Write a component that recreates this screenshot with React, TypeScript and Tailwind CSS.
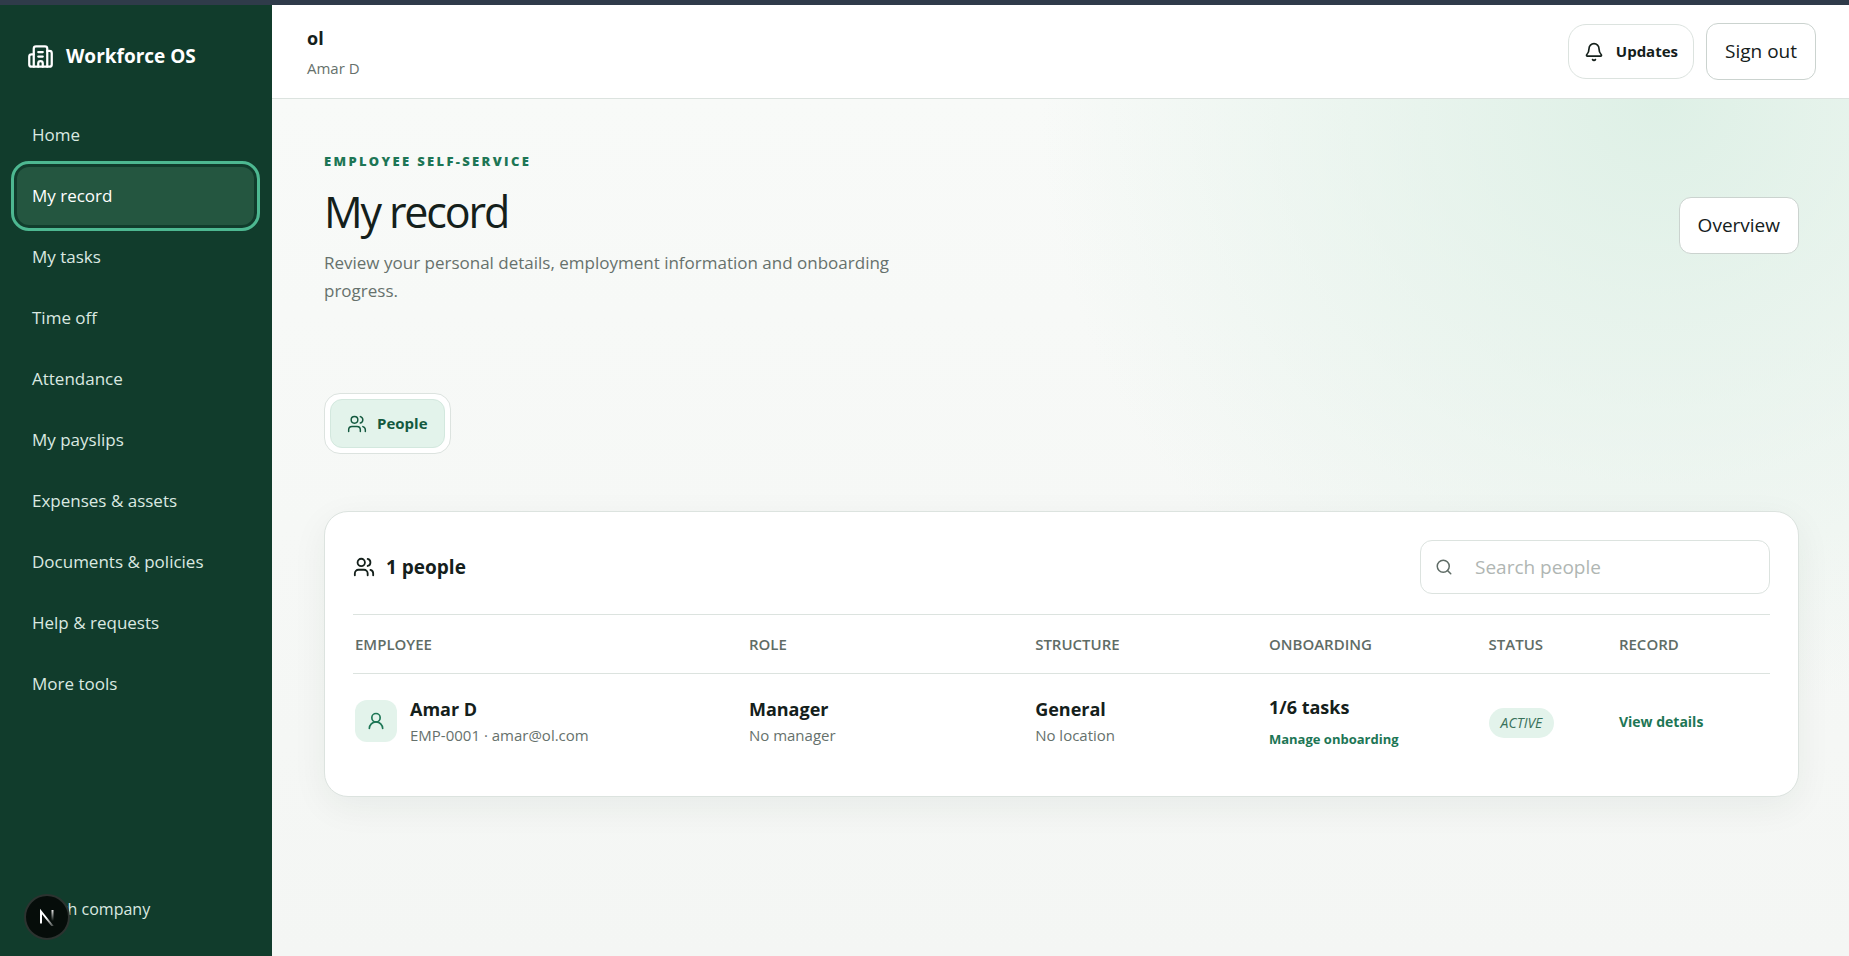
import { Bell, Building2, Search, UserRound, Users } from "lucide-react";
import { clsx } from "clsx";
import { useState } from "react";

const navLinks = [
  { href: "#home", label: "Home" },
  { href: "#record", label: "My record" },
  { href: "#tasks", label: "My tasks" },
  { href: "#time-off", label: "Time off" },
  { href: "#attendance", label: "Attendance" },
  { href: "#payslips", label: "My payslips" },
  { href: "#expenses", label: "Expenses & assets" },
  { href: "#documents", label: "Documents & policies" },
  { href: "#help", label: "Help & requests" },
  { href: "#more", label: "More tools" },
];

const columns = [
  { label: "Employee", width: "w-[27.8%]" },
  { label: "Role", width: "w-[20.2%]" },
  { label: "Structure", width: "w-[16.5%]" },
  { label: "Onboarding", width: "w-[15.5%]" },
  { label: "Status", width: "w-[9.2%]" },
  { label: "Record", width: "w-[10.8%]" },
];

const people = [
  {
    id: "EMP-0001",
    name: "Amar D",
    email: "amar@ol.com",
    role: "Manager",
    manager: "No manager",
    team: "General",
    location: "No location",
    tasks: "1/6 tasks",
    status: "ACTIVE",
  },
];

const DevBadge = () => (
  <button
    type="button"
    aria-label="Open dev tools"
    className="absolute bottom-4 left-6 size-[46px] rounded-full border-2 border-[#2c3330] bg-[#060d0a] flex items-center justify-center"
  >
    <svg width="18" height="18" viewBox="0 0 18 18" fill="none">
      <defs>
        <linearGradient id="stem" x1="0" y1="1" x2="0" y2="13" gradientUnits="userSpaceOnUse">
          <stop stopColor="#fff" />
          <stop offset="1" stopColor="#fff" stopOpacity="0" />
        </linearGradient>
        <linearGradient id="diagonal" x1="9" y1="9" x2="17" y2="19" gradientUnits="userSpaceOnUse">
          <stop stopColor="#fff" />
          <stop offset="1" stopColor="#fff" stopOpacity="0.1" />
        </linearGradient>
      </defs>
      <path d="M3 15.5V3.5L15 18.5" stroke="url(#diagonal)" strokeWidth="2" />
      <path d="M14.5 2v11.5" stroke="url(#stem)" strokeWidth="2" />
    </svg>
  </button>
);

const Sidebar = () => (
  <aside className="relative w-[272px] shrink-0 bg-[#113c2c] flex flex-col pl-[17px] pr-[18px] text-[#dbe9e1]">
    <div className="flex items-center gap-3 pl-[10px] pt-[37px] text-white">
      <Building2 size={27} strokeWidth={2} />
      <span className="text-[19px] leading-7 font-bold">Workforce OS</span>
    </div>
    <nav className="mt-9 flex flex-col gap-[3px]">
      {navLinks.map((link) => (
        <a
          key={link.href}
          href={link.href}
          className={clsx(
            "h-[58px] px-[15px] flex items-center rounded-xl text-[17px]",
            link.label === "My record" &&
              "bg-[#245640] text-white outline-3 outline-offset-3 outline-[#4db891]"
          )}
        >
          {link.label}
        </a>
      ))}
    </nav>
    <a href="#company" className="mt-auto mb-[35px] ml-3 text-[16px] leading-6">
      Switch company
    </a>
    <DevBadge />
  </aside>
);

const Topbar = () => (
  <header className="h-[94px] shrink-0 flex items-center justify-between bg-white border-b border-[#dce3df] pl-[35px] pr-[33px]">
    <div>
      <p className="text-[18px] leading-7 font-bold">ol</p>
      <p className="mt-1 text-[15px] leading-6 text-[#66716c]">Amar D</p>
    </div>
    <div className="flex items-center gap-3">
      <button
        type="button"
        className="h-[55px] px-[15px] flex items-center gap-3 rounded-[18px] border border-[#dce3df] text-[15px] font-bold"
      >
        <Bell size={20} />
        Updates
      </button>
      <button type="button" className="h-[57px] px-[18px] rounded-xl border border-[#cbd3cf] text-[19px]">
        Sign out
      </button>
    </div>
  </header>
);

const PeopleTable = ({ query }: { query: string }) => (
  <table className="w-full table-fixed border-t border-[#dce3df] text-left">
    <thead>
      <tr className="border-b border-[#dce3df]">
        {columns.map((column) => (
          <th
            key={column.label}
            scope="col"
            className={clsx("h-[59px] px-[2px] text-[15px] font-semibold uppercase text-[#5f6c66]", column.width)}
          >
            {column.label}
          </th>
        ))}
      </tr>
    </thead>
    <tbody>
      {people
        .filter((person) => person.name.toLowerCase().includes(query.toLowerCase()))
        .map((person) => (
          <tr key={person.id} className="h-[95px] *:px-[2px]">
            <td>
              <div className="flex items-center gap-[13px]">
                <span className="size-[42px] rounded-xl bg-[#e3f3eb] text-[#1d7655] flex items-center justify-center">
                  <UserRound size={20} />
                </span>
                <div>
                  <p className="text-[18px] leading-7 font-bold">{person.name}</p>
                  <p className="text-[15px] leading-6 text-[#66716c]">
                    {person.id} · {person.email}
                  </p>
                </div>
              </div>
            </td>
            <td>
              <p className="text-[18px] leading-7 font-bold">{person.role}</p>
              <p className="text-[15px] leading-6 text-[#66716c]">{person.manager}</p>
            </td>
            <td>
              <p className="text-[18px] leading-7 font-bold">{person.team}</p>
              <p className="text-[15px] leading-6 text-[#66716c]">{person.location}</p>
            </td>
            <td className="pt-[3px]">
              <p className="text-[18px] leading-7 font-bold">{person.tasks}</p>
              <a href="#onboarding" className="mt-1 block text-[13px] leading-7 font-bold text-[#1d7655]">
                Manage onboarding
              </a>
            </td>
            <td className="pt-[3px]">
              <em className="inline-block rounded-full bg-[#e3f3eb] px-3 text-[14px] leading-[30px] text-[#38715a]">
                {person.status}
              </em>
            </td>
            <td>
              <a href="#details" className="text-[14px] font-bold text-[#1d7655]">
                View details
              </a>
            </td>
          </tr>
        ))}
    </tbody>
  </table>
);

const App = () => {
  const [query, setQuery] = useState("");

  return (
    <div className="min-h-screen flex flex-col bg-[#f6f8f6] font-['Open_Sans','Noto_Sans',sans-serif] text-[#14201b]">
      <div className="h-[5px] bg-[#2f3b4a]" />
      <div className="grow flex">
        <Sidebar />
        <div className="grow min-w-0 flex flex-col">
          <Topbar />
          <main className="grow pl-[52px] pr-[50px] pt-[46px] pb-12 bg-[radial-gradient(circle_at_88%_0%,#def0e6_0,transparent_620px),linear-gradient(180deg,#f8faf8,#f4f6f4)]">
            {/* Page heading */}
            <div className="flex items-center justify-between">
              <div className="max-w-[600px]">
                <p className="text-[13px] leading-8 font-extrabold uppercase tracking-[0.18em] text-[#1d7655]">
                  Employee self-service
                </p>
                <h1 className="mt-[7px] text-[43px] leading-14 tracking-tighter">My record</h1>
                <p className="mt-[9px] text-[17px] leading-7 text-[#66716c]">
                  Review your personal details, employment information and onboarding progress.
                </p>
              </div>
              <button
                type="button"
                className="h-[57px] px-[18px] rounded-xl border border-[#cbd3cf] bg-white text-[19px]"
              >
                Overview
              </button>
            </div>

            {/* Section tabs */}
            <div className="mt-[88px] w-fit p-[5px] rounded-2xl border border-[#dce3df] bg-white">
              <button
                type="button"
                className="h-[49px] px-4 flex items-center gap-[10px] rounded-xl border border-[#d3e8de] bg-[#e3f3eb] text-[15px] font-bold text-[#14593f]"
              >
                <Users size={20} strokeWidth={1.75} />
                People
              </button>
            </div>

            {/* People list */}
            <section className="mt-[57px] rounded-3xl border border-[#dce3df] bg-white px-7 pt-7 pb-[27px] shadow-[0_10px_36px_rgba(20,50,38,0.06)]">
              <div className="mb-5 flex items-center justify-between">
                <h2 className="flex items-center gap-[11px] text-[19px] font-bold">
                  <Users size={22} />1 people
                </h2>
                <label className="w-[350px] h-[54px] px-[14px] flex items-center gap-[22px] rounded-xl border border-[#dce3df]">
                  <Search size={18} className="shrink-0 text-[#5f6c66]" />
                  <input
                    type="search"
                    aria-label="Search people"
                    placeholder="Search people"
                    value={query}
                    onChange={(event) => setQuery(event.target.value)}
                    className="min-w-0 grow text-[19px] outline-none placeholder:text-[#b0b6b3]"
                  />
                </label>
              </div>
              <PeopleTable query={query} />
            </section>
          </main>
        </div>
      </div>
    </div>
  );
};

export default App;
